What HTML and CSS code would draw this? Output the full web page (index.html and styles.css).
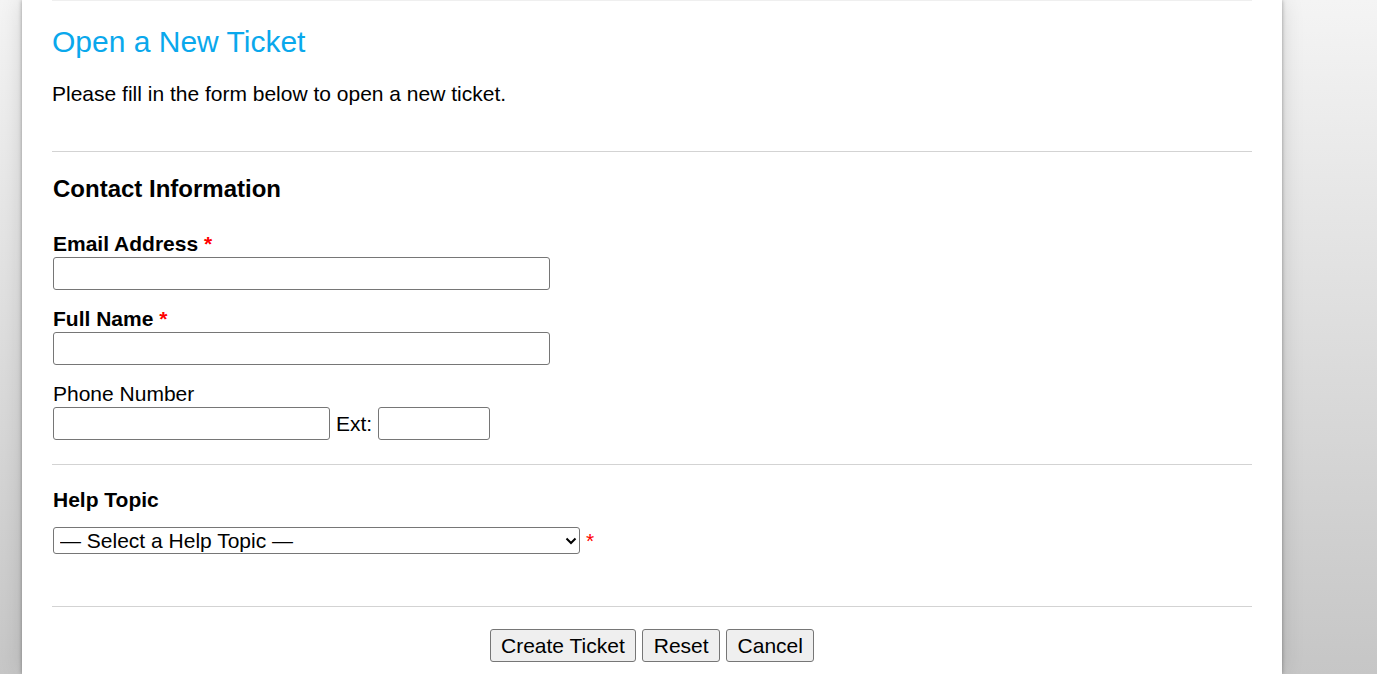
FILE: index.html
```html
<!DOCTYPE html>
<html>

<head>
    <link rel="stylesheet" href="styles.css">
</head>

<body>

    <div class="container">
        <div class="topline"></div>

        <h1>Open a New Ticket</h1>
        <p class="intro">Please fill in the form below to open a new ticket.</p>

        <form>
            <hr class="first">
            <h3>Contact Information</h3>

            <div class="field">
                <label class="required">Email Address <span class="error">*</span></label>
                <input type="text" class="wide">
            </div>
            <div class="field">
                <label class="required">Full Name <span class="error">*</span></label>
                <input type="text" class="wide">
            </div>
            <div class="field">
                <label>Phone Number</label>
                <div class="phone-row">
                    <input type="text" class="phone">
                    <span>Ext:</span>
                    <input type="text" class="ext">
                </div>
            </div>

            <hr class="second">
            <div class="topic">
                <label class="required">Help Topic</label>
                <div class="topic-row">
                    <div class="select-wrap">
                        <select class="topic-select">
                            <option>&mdash; Select a Help Topic &mdash;</option>
                        </select>
                        <svg class="chevron" width="12" height="8" viewBox="0 0 12 8">
                            <path d="M1.5 1.5 L6 6 L10.5 1.5" fill="none" stroke="#000" stroke-width="2"/>
                        </svg>
                    </div>
                    <span class="error">*</span>
                </div>
            </div>

            <hr class="third">
            <div class="buttons">
                <input type="submit" value="Create Ticket">
                <input type="reset" value="Reset">
                <input type="button" value="Cancel">
            </div>
        </form>
    </div>

</body>

</html>
```

FILE: styles.css
```css
html {
    height: 100%;
}

body {
    margin: 0;
    min-height: 100%;
    background: linear-gradient(#f4f4f4, #c6c6c6) fixed;
    font-family: "Liberation Sans", Arial, sans-serif;
    font-size: 21px;
    color: #000;
}

.container {
    width: 1200px;
    min-height: 674px;
    margin-left: 22px;
    padding: 0 30px;
    background: #fff;
    box-shadow: 0 0 4px rgba(0, 0, 0, 0.35), 0 0 22px rgba(0, 0, 0, 0.12);
    overflow: hidden;
}

.topline {
    height: 1px;
    background: #efefef;
}

h1 {
    margin: 23px 0 0 0;
    font-size: 30px;
    line-height: 36px;
    font-weight: normal;
    color: #0aa8ec;
}

.intro {
    margin: 22px 0 0 0;
    line-height: 24px;
}

hr {
    border: 0;
    height: 1px;
    background: #d3d3d3;
    margin: 0;
}

hr.first {
    margin-top: 45px;
}

hr.second {
    margin-top: 24px;
}

hr.third {
    margin-top: 52px;
}

h3 {
    margin: 23px 0 0 1px;
    font-size: 24px;
    line-height: 28px;
}

.field {
    margin-top: 17px;
    padding-left: 1px;
}

.field:first-of-type {
    margin-top: 29px;
}

label {
    display: block;
    line-height: 23px;
    padding-bottom: 2px;
}

label.required {
    font-weight: bold;
}

.error {
    color: #f00;
}

input[type="text"] {
    box-sizing: border-box;
    height: 33px;
    border: 1px solid #767676;
    border-radius: 3px;
    padding: 1px 3px;
    font: inherit;
    margin: 0;
}

.wide {
    display: block;
    width: 497px;
}

.phone-row {
    display: flex;
    align-items: center;
    gap: 6px;
}

.phone {
    width: 277px;
}

.ext {
    width: 112px;
}

.topic {
    margin-top: 23px;
    padding-left: 1px;
}

.topic-row {
    display: flex;
    align-items: center;
    gap: 6px;
    margin-top: 14px;
}

.select-wrap {
    position: relative;
    display: flex;
}

.topic-select {
    box-sizing: border-box;
    width: 527px;
    height: 27px;
    margin: 0;
    padding: 0 28px 0 6px;
    border: 1px solid #767676;
    border-radius: 3px;
    font: inherit;
    line-height: 25px;
    background: #fff;
    color: #000;
    appearance: none;
    -webkit-appearance: none;
}

.chevron {
    position: absolute;
    right: 3px;
    top: 10px;
    pointer-events: none;
}

.buttons {
    display: flex;
    justify-content: center;
    gap: 6px;
    margin-top: 22px;
}

.buttons input {
    box-sizing: border-box;
    height: 33px;
    padding: 0 10.5px;
    margin: 0;
    font: inherit;
    background: #efefef;
    border: 1px solid #767676;
    border-radius: 3px;
    color: #000;
}
```
